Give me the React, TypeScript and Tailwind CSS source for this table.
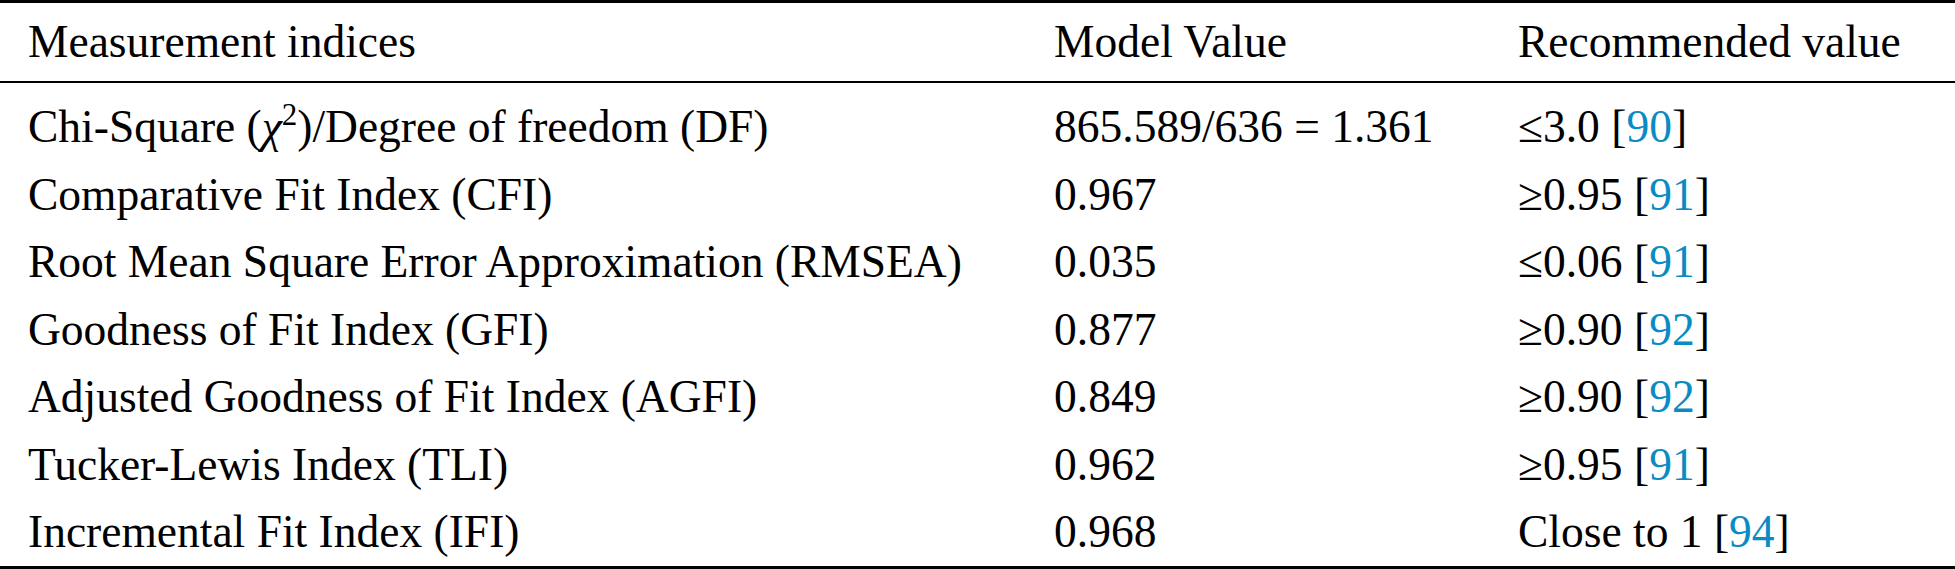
const rows: { name: React.ReactNode; value: string; rec: string; ref: string }[] = [
  {
    name: (
      <>
        Chi-Square (<span className="italic">χ</span>
        <sup className="text-[0.68em] -top-[0.55em]">2</sup>)/Degree of freedom (DF)
      </>
    ),
    value: "865.589/636 = 1.361",
    rec: "≤3.0",
    ref: "90",
  },
  { name: "Comparative Fit Index (CFI)", value: "0.967", rec: "≥0.95", ref: "91" },
  { name: "Root Mean Square Error Approximation (RMSEA)", value: "0.035", rec: "≤0.06", ref: "91" },
  { name: "Goodness of Fit Index (GFI)", value: "0.877", rec: "≥0.90", ref: "92" },
  { name: "Adjusted Goodness of Fit Index (AGFI)", value: "0.849", rec: "≥0.90", ref: "92" },
  { name: "Tucker-Lewis Index (TLI)", value: "0.962", rec: "≥0.95", ref: "91" },
  { name: "Incremental Fit Index (IFI)", value: "0.968", rec: "Close to 1", ref: "94" },
];

const cols = "grid grid-cols-[1026px_464px_1fr] pl-[28px]";

export default function App() {
  return (
    <div className="w-[1955px] h-[569px] bg-white text-black font-['Liberation_Serif',serif] text-[45.5px] leading-none">
      <div className="border-t-[3px] border-b-2 border-black">
        <div className={`${cols} h-[78px] items-center`}>
          <div>Measurement indices</div>
          <div>Model Value</div>
          <div>Recommended value</div>
        </div>
      </div>
      <div className="border-b-[3px] border-black pt-[10px]">
        {rows.map((r, i) => (
          <div key={i} className={`${cols} h-[67.5px] items-center whitespace-nowrap`}>
            <div>{r.name}</div>
            <div>{r.value}</div>
            <div>
              {r.rec} [<span className="text-[#0b8bc4]">{r.ref}</span>]
            </div>
          </div>
        ))}
      </div>
    </div>
  );
}
